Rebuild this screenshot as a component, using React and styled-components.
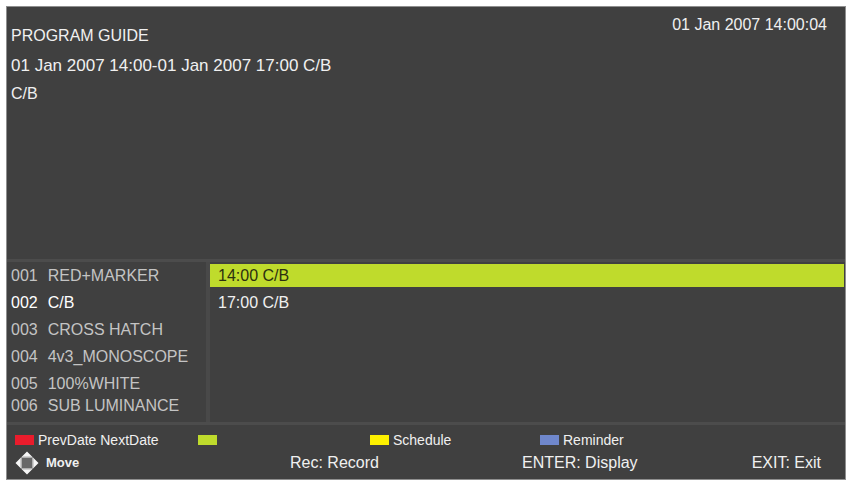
import React, { useState } from "react";
import styled, { createGlobalStyle } from "styled-components";

const channels = [
  { number: "001", name: "RED+MARKER" },
  { number: "002", name: "C/B" },
  { number: "003", name: "CROSS HATCH" },
  { number: "004", name: "4v3_MONOSCOPE" },
  { number: "005", name: "100%WHITE" },
  { number: "006", name: "SUB LUMINANCE" },
];

const events = [
  { time: "14:00", name: "C/B" },
  { time: "17:00", name: "C/B" },
];

const colorKeys = [
  { color: "#ea1c2c", label: "PrevDate NextDate" },
  { color: "#bfdb2c", label: "" },
  { color: "#fdf000", label: "Schedule" },
  { color: "#6f87cc", label: "Reminder" },
];

const MoveIcon = () => (
  <svg width="24" height="24" viewBox="0 0 24 24" aria-hidden="true">
    <path d="M12 0.5L17.5 6H6.5ZM12 23.5L17.5 18H6.5ZM0.5 12L6 6.5V17.5ZM23.5 12L18 6.5V17.5Z" fill="#f6f6f6" />
    <rect x="5.5" y="5.5" width="13" height="13" rx="3" fill="#b0b0b0" />
    <rect x="7" y="7" width="10" height="10" fill="#686868" />
  </svg>
);

const App = () => {
  const [channel, setChannel] = useState("002");
  const [eventTime, setEventTime] = useState("14:00");

  return (
    <StPage>
      <GlobalStyle />
      <StGuide>
        <StInfo>
          <StInfoText>
            <StTitle>PROGRAM GUIDE</StTitle>
            <StEventLine>01 Jan 2007 14:00-01 Jan 2007 17:00 C/B</StEventLine>
            <StDescription>C/B</StDescription>
          </StInfoText>
          <StClock>01 Jan 2007 14:00:04</StClock>
        </StInfo>
        <StSchedule>
          <StChannelList>
            {channels.map(({ number, name }) => (
              <li key={number}>
                <StChannel
                  type="button"
                  $active={number === channel}
                  onClick={() => setChannel(number)}
                >
                  <span>{number}</span>
                  <span>{name}</span>
                </StChannel>
              </li>
            ))}
          </StChannelList>
          <StEventList>
            {events.map(({ time, name }) => (
              <li key={time}>
                <StEvent
                  type="button"
                  $active={time === eventTime}
                  onClick={() => setEventTime(time)}
                >
                  {time} {name}
                </StEvent>
              </li>
            ))}
          </StEventList>
        </StSchedule>
        <StFooter>
          <StColorKeys>
            {colorKeys.map(({ color, label }) => (
              <StColorKey key={color}>
                <StSwatch $color={color} />
                {label}
              </StColorKey>
            ))}
          </StColorKeys>
          <StHints>
            <StMove>
              <MoveIcon />
              Move
            </StMove>
            <span>Rec: Record</span>
            <span>ENTER: Display</span>
            <StExit>EXIT: Exit</StExit>
          </StHints>
        </StFooter>
      </StGuide>
    </StPage>
  );
};

export default App;

const GlobalStyle = createGlobalStyle`
  * {
    box-sizing: border-box;
  }

  body {
    margin: 0;
    background-color: #fff;
    font-family: "Liberation Sans", Arial, sans-serif;
    font-size: 16px;
  }

  h1, p, ul {
    margin: 0;
    padding: 0;
  }

  ul {
    list-style: none;
  }
`;

const StPage = styled.div`
  min-height: 100vh;
  padding: 6px 2px 4px 6px;
  display: flex;
`;

const StGuide = styled.main`
  flex: 1;
  display: flex;
  flex-direction: column;
  border: 1px solid #8f8f8f;
  background-color: #404040;
  color: #f0f0f0;
`;

const StInfo = styled.section`
  flex: 1;
  display: flex;
  justify-content: space-between;
  padding: 8px 18px 0 4px;
`;

const StInfoText = styled.div`
  padding-top: 7px;
`;

const StTitle = styled.h1`
  font-size: 16px;
  font-weight: 400;
  line-height: 28px;
`;

const StEventLine = styled.p`
  font-size: 17px;
  line-height: 32px;
`;

const StDescription = styled.p`
  line-height: 24px;
`;

const StClock = styled.time`
  line-height: 20px;
`;

const StSchedule = styled.section`
  display: grid;
  grid-template-columns: 203px 1fr;
  border-top: 3px solid #4c4c4c;
  border-bottom: 3px solid #4c4c4c;
`;

const StChannelList = styled.ul`
  border-right: 4px solid #494949;
  padding-bottom: 7px;

  li:last-child button {
    height: 18px;
  }
`;

const StRow = styled.button`
  display: flex;
  align-items: center;
  width: 100%;
  border: none;
  background: none;
  font: inherit;
  text-align: left;
  cursor: pointer;
`;

const StChannel = styled(StRow)`
  gap: 10px;
  height: 27px;
  padding: 0 4px;
  color: ${({ $active }) => ($active ? "#ffffff" : "#c4c4c4")};
`;

const StEventList = styled.ul`
  display: flex;
  flex-direction: column;
  gap: 4px;
  padding: 2px 1px 0 0;
`;

const StEvent = styled(StRow)`
  height: 23px;
  padding: 0 8px;
  background-color: ${({ $active }) => ($active ? "#bfdb2c" : "transparent")};
  color: ${({ $active }) => ($active ? "#2c3010" : "#f0f0f0")};
`;

const StFooter = styled.footer`
  padding: 5px 24px 3px 8px;
`;

const StColorKeys = styled.ul`
  display: grid;
  grid-template-columns: 183fr 172fr 170fr 281fr;
  font-size: 14px;
  line-height: 20px;
`;

const StColorKey = styled.li`
  display: flex;
  align-items: center;
  gap: 4px;
`;

const StSwatch = styled.span`
  width: 19px;
  height: 10px;
  background-color: ${({ $color }) => $color};
`;

const StHints = styled.div`
  display: grid;
  grid-template-columns: 275fr 232fr 150fr 149fr;
  align-items: center;
  line-height: 26px;
`;

const StMove = styled.span`
  display: flex;
  align-items: center;
  gap: 7px;
  font-size: 13px;
  font-weight: 700;
`;

const StExit = styled.span`
  text-align: right;
`;
